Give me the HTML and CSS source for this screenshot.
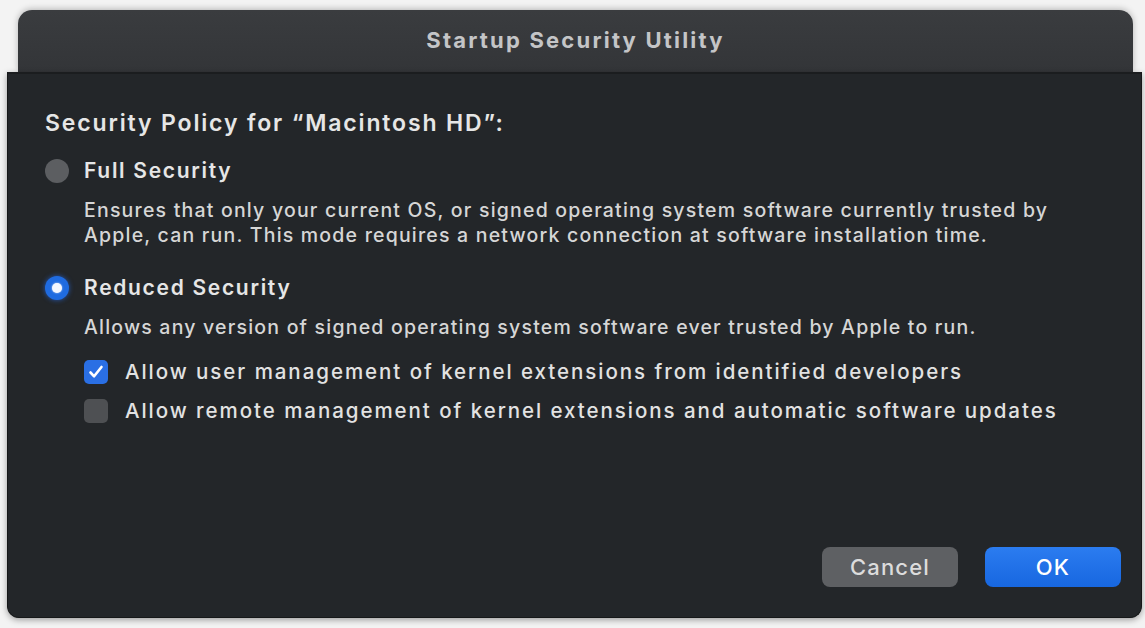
FILE: index.html
```html
<!DOCTYPE html>
<html lang="en">
<head>
    <meta charset="UTF-8">
    <title>Startup Security Utility</title>
    <link rel="stylesheet" href="styles.css">
</head>
<body>

<div class="window">
    <!-- Title Bar -->
    <div class="titlebar">Startup Security Utility</div>

    <!-- Sheet -->
    <div class="sheet">
        <h2 class="policy-title">Security Policy for “Macintosh HD”:</h2>

        <div class="option">
            <span class="radio"></span>
            <div class="option-body">
                <div class="option-name">Full Security</div>
                <p class="option-desc">Ensures that only your current OS, or signed operating system software currently trusted by<br>Apple, can run. This mode requires a network connection at software installation time.</p>
            </div>
        </div>

        <div class="option">
            <span class="radio checked"></span>
            <div class="option-body">
                <div class="option-name">Reduced Security</div>
                <p class="option-desc">Allows any version of signed operating system software ever trusted by Apple to run.</p>

                <div class="check-list">
                    <label class="check-row">
                        <span class="checkbox checked">
                            <svg viewBox="0 0 24 24" width="24" height="24"><path d="M6.5 12.5l3.6 3.8L17.5 7" fill="none" stroke="#fff" stroke-width="2.6" stroke-linecap="round" stroke-linejoin="round"/></svg>
                        </span>
                        Allow user management of kernel extensions from identified developers
                    </label>
                    <label class="check-row">
                        <span class="checkbox"></span>
                        Allow remote management of kernel extensions and automatic software updates
                    </label>
                </div>
            </div>
        </div>

        <!-- Buttons -->
        <div class="button-row">
            <button class="btn btn-cancel">Cancel</button>
            <button class="btn btn-ok">OK</button>
        </div>
    </div>
</div>

</body>
</html>
```

FILE: styles.css
```css
/* General Styles */
body {
    font-family: Inter, "Open Sans", sans-serif;
    margin: 0;
    padding: 0;
    background-color: #f3f3f3;
    height: 628px;
    overflow: hidden;
}

.window {
    display: flex;
    flex-direction: column;
    padding-top: 10px;
}

.titlebar {
    margin: 0 12px 0 18px;
    height: 62px;
    border-radius: 14px 14px 0 0;
    background: linear-gradient(#3a3c3f, #333538);
    box-shadow: 0 -1px 6px rgba(0, 0, 0, 0.25);
    color: #c4c5c7;
    font-size: 22px;
    font-weight: 700;
    letter-spacing: 2.2px;
    display: flex;
    justify-content: center;
    align-items: center;
    padding-bottom: 2px;
    box-sizing: border-box;
}

.sheet {
    margin: 0 3px 0 7px;
    height: 546px;
    background-color: #232629;
    border: 1px solid #161819;
    border-top: 2px solid #1b1d1f;
    border-radius: 0 0 12px 12px;
    box-shadow: 0 2px 6px rgba(0, 0, 0, 0.35);
    box-sizing: border-box;
    padding: 36px 20px 0 37px;
    display: flex;
    flex-direction: column;
    color: #e6e6e6;
    white-space: nowrap;
}

.policy-title {
    margin: 0 0 22px 0;
    font-size: 23px;
    font-weight: 600;
    line-height: 26px;
    letter-spacing: 1.85px;
}

.option {
    display: flex;
    gap: 15px;
    margin-bottom: 27px;
}

.radio {
    width: 24px;
    height: 24px;
    border-radius: 50%;
    background-color: #5c5e61;
    flex-shrink: 0;
    margin-top: 1px;
    box-sizing: border-box;
}

.radio.checked {
    background-color: #1f6be0;
    box-shadow: 0 0 5px rgba(40, 110, 240, 0.7);
    display: flex;
    justify-content: center;
    align-items: center;
}

.radio.checked::after {
    content: "";
    width: 10px;
    height: 10px;
    border-radius: 50%;
    background-color: #f4f7ff;
    box-shadow: 0 0 2px rgba(255, 255, 255, 0.8);
}

.option-name {
    font-size: 21px;
    font-weight: 600;
    line-height: 26px;
    letter-spacing: 1.7px;
}

.option-desc {
    margin: 14px 0 0 0;
    font-size: 19.5px;
    font-weight: 500;
    line-height: 25px;
    letter-spacing: 1.2px;
    color: #d6d6d6;
}

.check-list {
    display: flex;
    flex-direction: column;
    gap: 14px;
    margin-top: 19px;
}

.check-row {
    display: flex;
    align-items: center;
    gap: 17px;
    font-size: 20.5px;
    font-weight: 500;
    letter-spacing: 1.95px;
    color: #e2e2e2;
}

.checkbox {
    width: 24px;
    height: 24px;
    border-radius: 5px;
    background-color: #4e5053;
    flex-shrink: 0;
}

.checkbox.checked {
    background-color: #2a6fe4;
}

.checkbox svg {
    display: block;
}

.button-row {
    margin-top: auto;
    margin-bottom: 30px;
    display: flex;
    justify-content: flex-end;
    gap: 27px;
}

.btn {
    width: 136px;
    height: 40px;
    border: none;
    border-radius: 8px;
    font-family: inherit;
    font-size: 22px;
    font-weight: 500;
    letter-spacing: 1.2px;
}

.btn-cancel {
    background-color: #5e6063;
    color: #dcdcdc;
}

.btn-ok {
    background: linear-gradient(#2b7cf0, #1767e0);
    color: #fff;
}
```
